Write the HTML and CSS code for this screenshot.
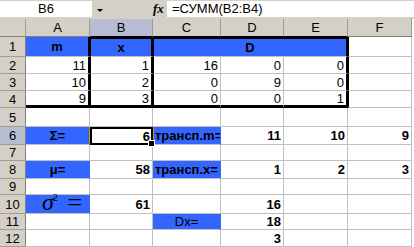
FILE: index.html
```html
<!DOCTYPE html>
<html lang="ru">
<head>
    <meta charset="UTF-8">
    <title>Лист1</title>
    <link rel="stylesheet" href="styles.css">
</head>
<body>

<div class="bar">
    <div class="namebox">B6</div>
    <div class="drop"><span class="arrow"></span></div>
    <div class="fx">fx</div>
    <div class="formula">=СУММ(B2:B4)</div>
</div>

<div class="sheet">
    <!-- column headers -->
    <div class="hd"></div>
    <div class="hd">A</div>
    <div class="hd hsel dark">B</div>
    <div class="hd dark">C</div>
    <div class="hd dark">D</div>
    <div class="hd dark">E</div>
    <div class="hd">F</div>

    <!-- 1 -->
    <div class="rh">1</div>
    <div class="c blue b ctr tr">m</div>
    <div class="c blue b ctr tl tr tt">x</div>
    <div class="c blue b ctr tl tr tt span3">D</div>
    <div class="c tl"></div>

    <!-- 2 -->
    <div class="rh">2</div>
    <div class="c num tr">11</div>
    <div class="c num tl tr">1</div>
    <div class="c num tl">16</div>
    <div class="c num">0</div>
    <div class="c num tr">0</div>
    <div class="c tl"></div>

    <!-- 3 -->
    <div class="rh">3</div>
    <div class="c num tr">10</div>
    <div class="c num tl tr">2</div>
    <div class="c num tl">0</div>
    <div class="c num">9</div>
    <div class="c num tr">0</div>
    <div class="c tl"></div>

    <!-- 4 -->
    <div class="rh">4</div>
    <div class="c num tr tb">9</div>
    <div class="c num tl tr tb">3</div>
    <div class="c num tl tb">0</div>
    <div class="c num tb">0</div>
    <div class="c num tr tb">1</div>
    <div class="c tl"></div>

    <!-- 5 -->
    <div class="rh">5</div>
    <div class="c"></div>
    <div class="c"></div>
    <div class="c"></div>
    <div class="c"></div>
    <div class="c"></div>
    <div class="c"></div>

    <!-- 6 -->
    <div class="rh hsel">6</div>
    <div class="c blue b ctr">Σ=</div>
    <div class="c b num active">6</div>
    <div class="c blue b">трансп.m=</div>
    <div class="c b num">11</div>
    <div class="c b num">10</div>
    <div class="c b num">9</div>

    <!-- 7 -->
    <div class="rh">7</div>
    <div class="c"></div>
    <div class="c"></div>
    <div class="c"></div>
    <div class="c"></div>
    <div class="c"></div>
    <div class="c"></div>

    <!-- 8 -->
    <div class="rh">8</div>
    <div class="c blue b ctr">μ=</div>
    <div class="c b num">58</div>
    <div class="c blue b">трансп.x=</div>
    <div class="c b num">1</div>
    <div class="c b num">2</div>
    <div class="c b num">3</div>

    <!-- 9 -->
    <div class="rh">9</div>
    <div class="c"></div>
    <div class="c"></div>
    <div class="c"></div>
    <div class="c"></div>
    <div class="c"></div>
    <div class="c"></div>

    <!-- 10 -->
    <div class="rh">10</div>
    <div class="c blue eqcell"><span class="sigma">σ</span><span class="sq">2</span><span class="eqsign">=</span></div>
    <div class="c b num">61</div>
    <div class="c"></div>
    <div class="c b num">16</div>
    <div class="c"></div>
    <div class="c"></div>

    <!-- 11 -->
    <div class="rh">11</div>
    <div class="c"></div>
    <div class="c"></div>
    <div class="c blue ctr">Dx=</div>
    <div class="c b num">18</div>
    <div class="c"></div>
    <div class="c"></div>

    <!-- 12 -->
    <div class="rh">12</div>
    <div class="c"></div>
    <div class="c"></div>
    <div class="c"></div>
    <div class="c b num">3</div>
    <div class="c"></div>
    <div class="c"></div>
</div>

</body>
</html>
```

FILE: styles.css
```css
* {
    margin: 0;
    padding: 0;
    box-sizing: border-box;
}

body {
    width: 414px;
    height: 247px;
    overflow: hidden;
    background-color: #fff;
    font-family: "Liberation Sans", Arial, sans-serif;
    font-size: 13px;
    color: #000;
}

/* ---------- formula bar ---------- */

.bar {
    height: 19px;
    padding-top: 1px;
    background-color: #d4d0c8;
    display: flex;
    align-items: flex-start;
}

.namebox {
    width: 92px;
    height: 16px;
    line-height: 16px;
    background-color: #fff;
    text-align: center;
}

.drop {
    width: 12px;
    height: 16px;
    padding: 8px 0 0 5px;
}

.arrow {
    display: block;
    width: 0;
    height: 0;
    border-left: 3px solid transparent;
    border-right: 3px solid transparent;
    border-top: 3px solid #000;
}

.fx {
    margin-left: 49px;
    width: 14px;
    height: 16px;
    line-height: 16px;
    font-family: "Liberation Serif", serif;
    font-style: italic;
    font-weight: bold;
    font-size: 13px;
}

.formula {
    flex: 1;
    height: 16px;
    line-height: 16px;
    padding-left: 5px;
    background-color: #fff;
}

/* ---------- grid ---------- */

.sheet {
    width: 412px;
    display: grid;
    grid-template-columns: 26px 64px 63px 68px 63px 64px 64px;
    grid-template-rows: 18px 20px 17px 17px 17px 19px 18px 16px 18px 16px 19px 16px 17px;
}

.hd,
.rh {
    background-color: #d4d0c8;
    display: flex;
    justify-content: center;
    align-items: center;
    line-height: 15px;
}

.hd {
    border-right: 1px solid #a09c94;
    border-bottom: 1px solid #808080;
}

.hd.dark {
    border-bottom-color: #000;
}

.rh {
    border-right: 1px solid #808080;
    border-bottom: 1px solid #a09c94;
}

.hsel {
    background-color: #b6bdd2;
}

.c {
    border-right: 1px solid #c0c0c0;
    border-bottom: 1px solid #c0c0c0;
    padding: 0 2px;
    display: flex;
    align-items: center;
    line-height: 15px;
    white-space: nowrap;
    overflow: hidden;
}

.blue {
    background-color: #3366ff;
    border-right-color: #3366ff;
}

.b {
    font-weight: bold;
}

.ctr {
    justify-content: center;
}

.num {
    justify-content: flex-end;
}

.span3 {
    grid-column: span 3;
}

/* thick outline around B1:B4 and C1:E4 */
.tl {
    border-left: 1px solid #000;
}

.tr {
    border-right: 2px solid #000;
}

.tt {
    border-top: 2px solid #000;
}

.tb {
    border-bottom: 3px solid #000;
}

/* active cell B6 */
.active {
    position: relative;
    z-index: 1;
    border: 2px solid #000;
    padding-right: 1px;
    box-shadow: -1px 0 0 #c89600, 1px 0 0 #c89600;
    overflow: visible;
}

.active::after {
    content: "";
    position: absolute;
    right: -4px;
    bottom: -4px;
    width: 5px;
    height: 5px;
    background-color: #000;
    border: 1px solid #fff;
}

/* sigma squared */
.eqcell {
    padding-left: 16px;
    align-items: flex-end;
    overflow: visible;
    font-family: "Liberation Serif", "DejaVu Serif", serif;
}

.sigma {
    font-style: italic;
    font-size: 24px;
    line-height: 20px;
    margin-bottom: 1px;
}

.sq {
    align-self: flex-start;
    font-size: 10px;
    line-height: 10px;
    margin: -2px 0 0 -1px;
}

.eqsign {
    font-size: 24px;
    line-height: 20px;
    margin: 0 0 1px 10px;
    transform: scaleX(1.1);
}
```
